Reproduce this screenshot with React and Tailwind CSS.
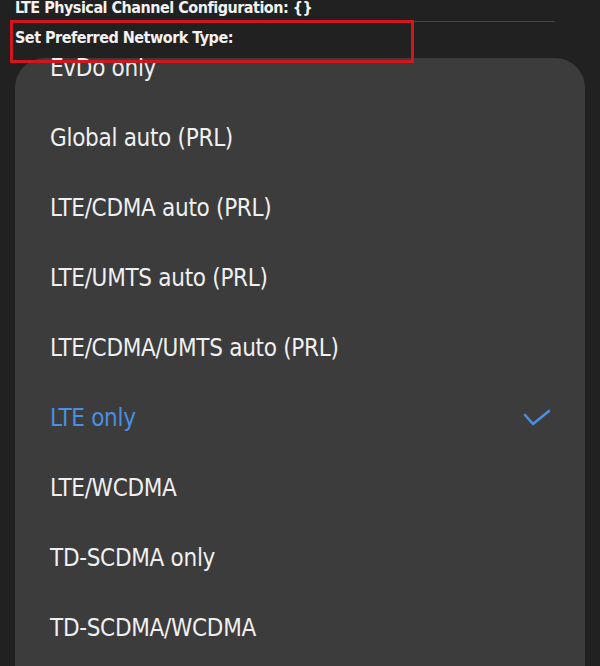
import React from "react";

const options = [
  "EvDo only",
  "Global auto (PRL)",
  "LTE/CDMA auto (PRL)",
  "LTE/UMTS auto (PRL)",
  "LTE/CDMA/UMTS auto (PRL)",
  "LTE only",
  "LTE/WCDMA",
  "TD-SCDMA only",
  "TD-SCDMA/WCDMA",
  "TD-SCDMA/GSM",
];

const selected = "LTE only";

function Check() {
  return (
    <svg width="28" height="18" viewBox="0 0 28 18" fill="none">
      <path
        d="M2 6 L10 15 L26 2"
        stroke="#4b8fe2"
        strokeWidth="2.6"
        strokeLinecap="round"
        strokeLinejoin="round"
      />
    </svg>
  );
}

export default function App() {
  return (
    <div
      className="relative h-[666px] w-[600px] overflow-hidden bg-[#212121] text-white"
      style={{ fontFamily: '"DejaVu Sans Condensed", "Liberation Sans", sans-serif' }}
    >
      <div className="px-[15px]">
        <div className="-mt-[3px] text-[16px] font-bold leading-[22px] tracking-[-0.5px] text-[#f2f2f2]">
          LTE Physical Channel Configuration: {"{}"}
        </div>
        <div className="mt-[2px] h-px w-[540px] bg-[#464646]" />
        <div className="mt-[4px] text-[16px] font-bold leading-[24px] tracking-[-0.5px] text-[#f2f2f2]">
          Set Preferred Network Type:
        </div>
      </div>

      {/* highlight frame around the setting label */}
      <div className="pointer-events-none absolute left-[10px] top-[20px] z-10 h-[43px] w-[404px] border-[3px] border-[#d3161d]" />

      <div className="mx-[15px] mt-[8px] h-[700px] overflow-hidden rounded-t-[30px] bg-[#3c3c3c]">
        <div className="-mt-[25px]">
          {options.map((o) => (
            <div
              key={o}
              className="flex h-[70px] items-center justify-between pl-[35px] pr-[34px]"
            >
              <span
                className={
                  "text-[24px] leading-none tracking-[-0.3px] " +
                  (o === selected ? "text-[#4b8fe2]" : "text-[#f0f0f0]")
                }
              >
                {o}
              </span>
              {o === selected && <Check />}
            </div>
          ))}
        </div>
      </div>
    </div>
  );
}
